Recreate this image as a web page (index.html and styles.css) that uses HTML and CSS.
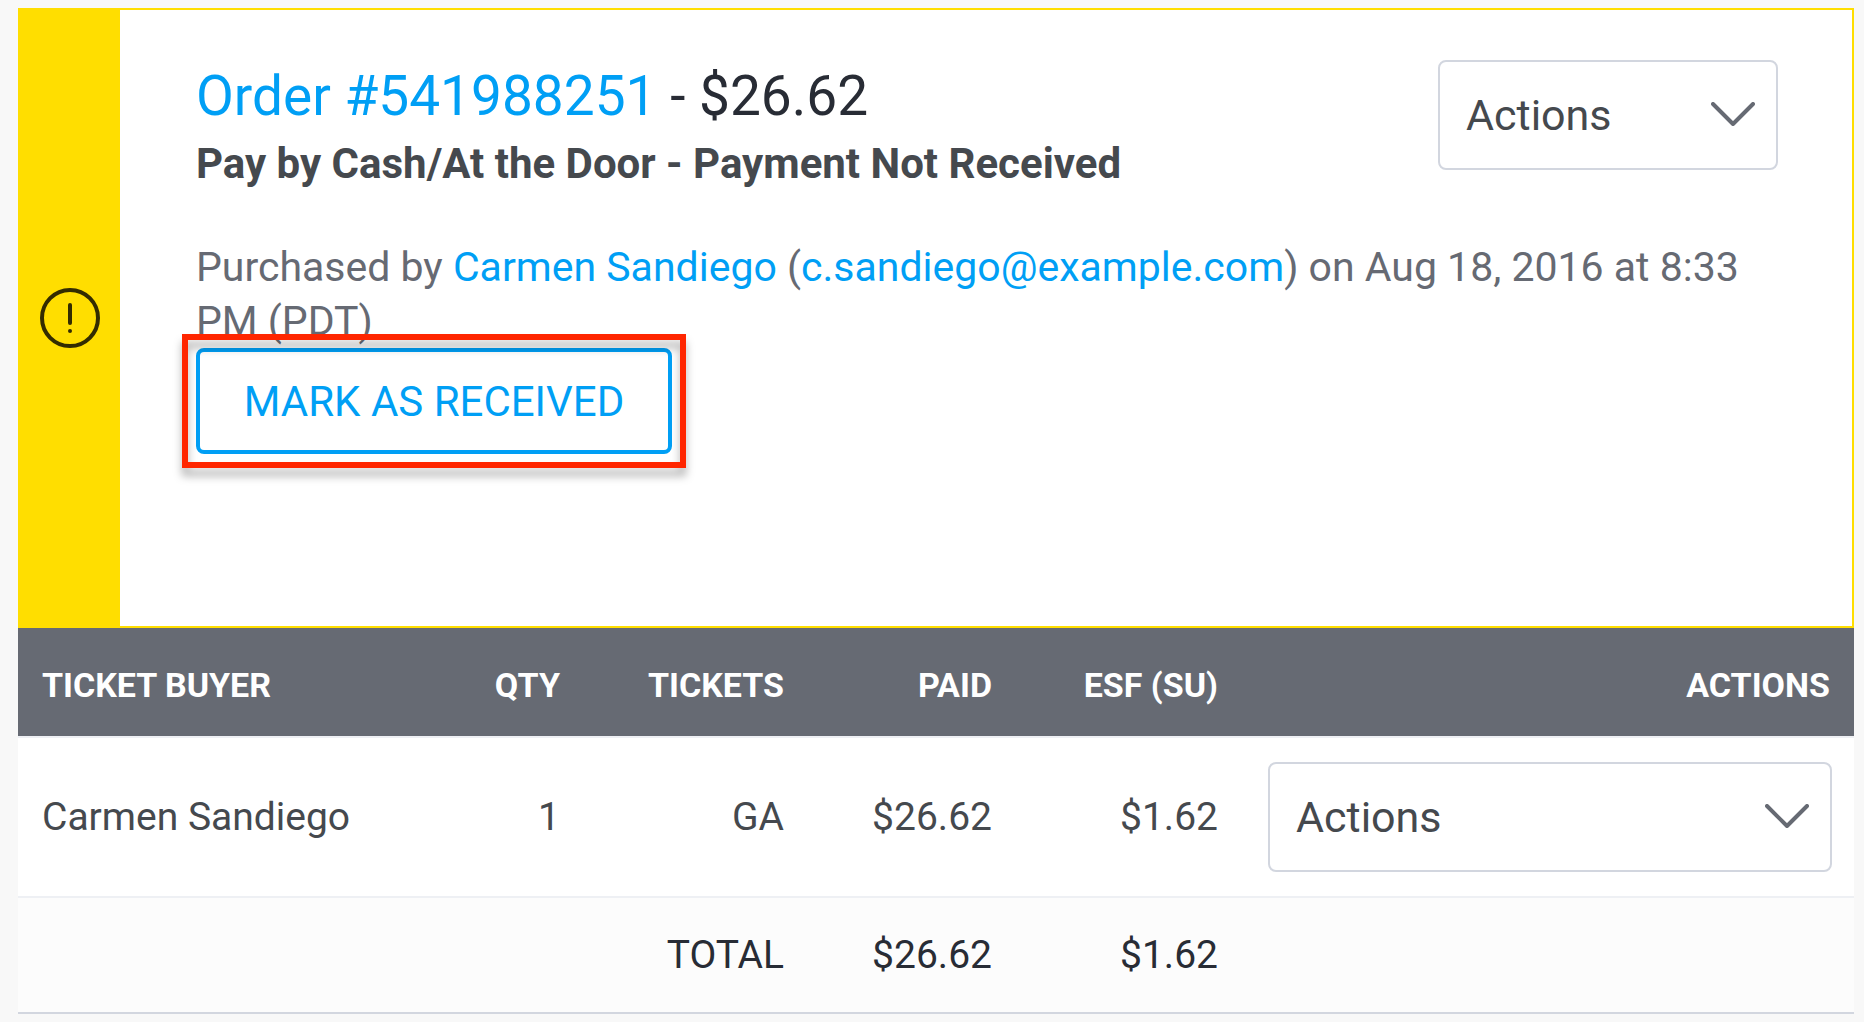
FILE: index.html
```
<!DOCTYPE html>
<html lang="en">

<head>
   <meta charset="UTF-8">
   <title>Order #541988251</title>
   <link rel="stylesheet" href="styles.css">
</head>

<body>

<div class="order">
   <div class="order-status">
      <svg class="status-icon" viewBox="0 0 60 60" role="img" aria-label="Payment not received">
         <circle cx="30" cy="30" r="28" fill="none" stroke="#332c00" stroke-width="4"/>
         <path d="M30 17v18" fill="none" stroke="#332c00" stroke-width="4" stroke-linecap="round"/>
         <circle cx="30" cy="43" r="2" fill="#332c00"/>
      </svg>
   </div>

   <div class="order-body">
      <div class="order-head">
         <div>
            <h1 class="order-title"><a href="#">Order #541988251</a> - $26.62</h1>
            <p class="order-payment">Pay by Cash/At the Door - Payment Not Received</p>
         </div>
         <div class="select">
            <select aria-label="Order actions">
               <option>Actions</option>
            </select>
            <svg class="chevron" viewBox="0 0 44 24"><path d="M2 2l20 20L42 2"/></svg>
         </div>
      </div>

      <p class="order-buyer">Purchased by <a href="#">Carmen Sandiego</a> (<a href="#">c.sandiego@example.com</a>) on Aug 18, 2016 at 8:33 PM (PDT)</p>

      <div class="mark">
         <button type="button" class="mark-btn">MARK AS RECEIVED</button>
         <div class="mark-highlight"></div>
      </div>
   </div>
</div>

<table class="tickets">
   <colgroup>
      <col>
      <col class="col-qty">
      <col class="col-tickets">
      <col class="col-paid">
      <col class="col-esf">
      <col class="col-actions">
   </colgroup>
   <thead>
      <tr>
         <th>TICKET BUYER</th>
         <th>QTY</th>
         <th>TICKETS</th>
         <th>PAID</th>
         <th>ESF (SU)</th>
         <th>ACTIONS</th>
      </tr>
   </thead>
   <tbody>
      <tr>
         <td>Carmen Sandiego</td>
         <td>1</td>
         <td>GA</td>
         <td>$26.62</td>
         <td>$1.62</td>
         <td>
            <div class="select">
               <select aria-label="Ticket actions">
                  <option>Actions</option>
               </select>
               <svg class="chevron" viewBox="0 0 44 24"><path d="M2 2l20 20L42 2"/></svg>
            </div>
         </td>
      </tr>
   </tbody>
   <tfoot>
      <tr>
         <td></td>
         <td></td>
         <td>TOTAL</td>
         <td>$26.62</td>
         <td>$1.62</td>
         <td></td>
      </tr>
   </tfoot>
</table>

</body>
</html>
```
FILE: styles.css
```
* {
   box-sizing: border-box;
}

body {
   margin: 0;
   padding: 8px 10px 8px 18px;
   background-color: #f8f8f8;
   color: #45494e;
   font-family: Roboto, "Liberation Sans", sans-serif;
   font-size: 42px;
}

a {
   color: #009ff5;
   text-decoration: none;
}

.order {
   display: flex;
   min-height: 620px;
   border: 2px solid #ffde00;
   background-color: #fff;
}

.order-status {
   display: flex;
   align-items: center;
   justify-content: center;
   flex: none;
   width: 100px;
   background-color: #ffde00;
}

.status-icon {
   width: 60px;
   height: 60px;
}

.order-body {
   flex: 1;
   padding: 50px 74px 50px 76px;
}

.order-head {
   display: flex;
   justify-content: space-between;
   align-items: flex-start;
}

.order-title {
   margin: 0;
   padding-top: 4px;
   color: #282c35;
   font-size: 55px;
   font-weight: normal;
   line-height: 64px;
}

.order-payment {
   margin: 0;
   font-weight: bold;
   line-height: 72px;
}

.order-buyer {
   margin: 40px 0 0;
   color: #666a73;
   font-size: 41px;
   line-height: 54px;
}

.select {
   position: relative;
}

.select select {
   display: block;
   width: 340px;
   height: 110px;
   padding: 0 26px;
   border: 2px solid #d2d6df;
   border-radius: 8px;
   background-color: #fff;
   color: #45494e;
   font: inherit;
   font-size: 43px;
   appearance: none;
}

.chevron {
   position: absolute;
   top: 42px;
   right: 23px;
   width: 44px;
   height: 24px;
   fill: none;
   stroke: #666a73;
   stroke-width: 4px;
   stroke-linecap: round;
   stroke-linejoin: round;
   pointer-events: none;
}

.mark {
   position: relative;
   display: inline-block;
}

.mark-btn {
   display: block;
   width: 476px;
   height: 106px;
   border: 4px solid #009ff5;
   border-radius: 8px;
   background-color: #fff;
   color: #009ff5;
   font: inherit;
}

/* red frame drawn round the button */
.mark-highlight {
   position: absolute;
   inset: -14px;
   border: 6px solid #ff2600;
   filter: drop-shadow(0 8px 4px rgba(0, 0, 0, 0.3));
   pointer-events: none;
}

.tickets {
   width: 100%;
   table-layout: fixed;
   border-collapse: separate;
   border-spacing: 0;
   background-color: #fff;
   font-size: 39px;
}

.col-qty {
   width: 144px;
}

.col-tickets {
   width: 224px;
}

.col-paid {
   width: 208px;
}

.col-esf {
   width: 226px;
}

.col-actions {
   width: 612px;
}

.tickets th,
.tickets td {
   padding: 0 24px;
   text-align: right;
}

.tickets th:first-child,
.tickets td:first-child {
   text-align: left;
}

.tickets th {
   height: 108px;
   padding-top: 6px;
   background-color: #666a73;
   color: #fff;
   font-size: 34px;
}

.tickets tbody td {
   height: 160px;
   border-top: 2px solid #eef0f4;
}

.tickets tbody td:last-child {
   padding: 0 22px 0 26px;
}

.tickets td .select select {
   width: 100%;
   text-align: left;
}

.tickets tfoot td {
   height: 118px;
   border-top: 2px solid #eef0f4;
   border-bottom: 2px solid #d2d6df;
   background-color: #fcfcfc;
   color: #282c35;
}
```
